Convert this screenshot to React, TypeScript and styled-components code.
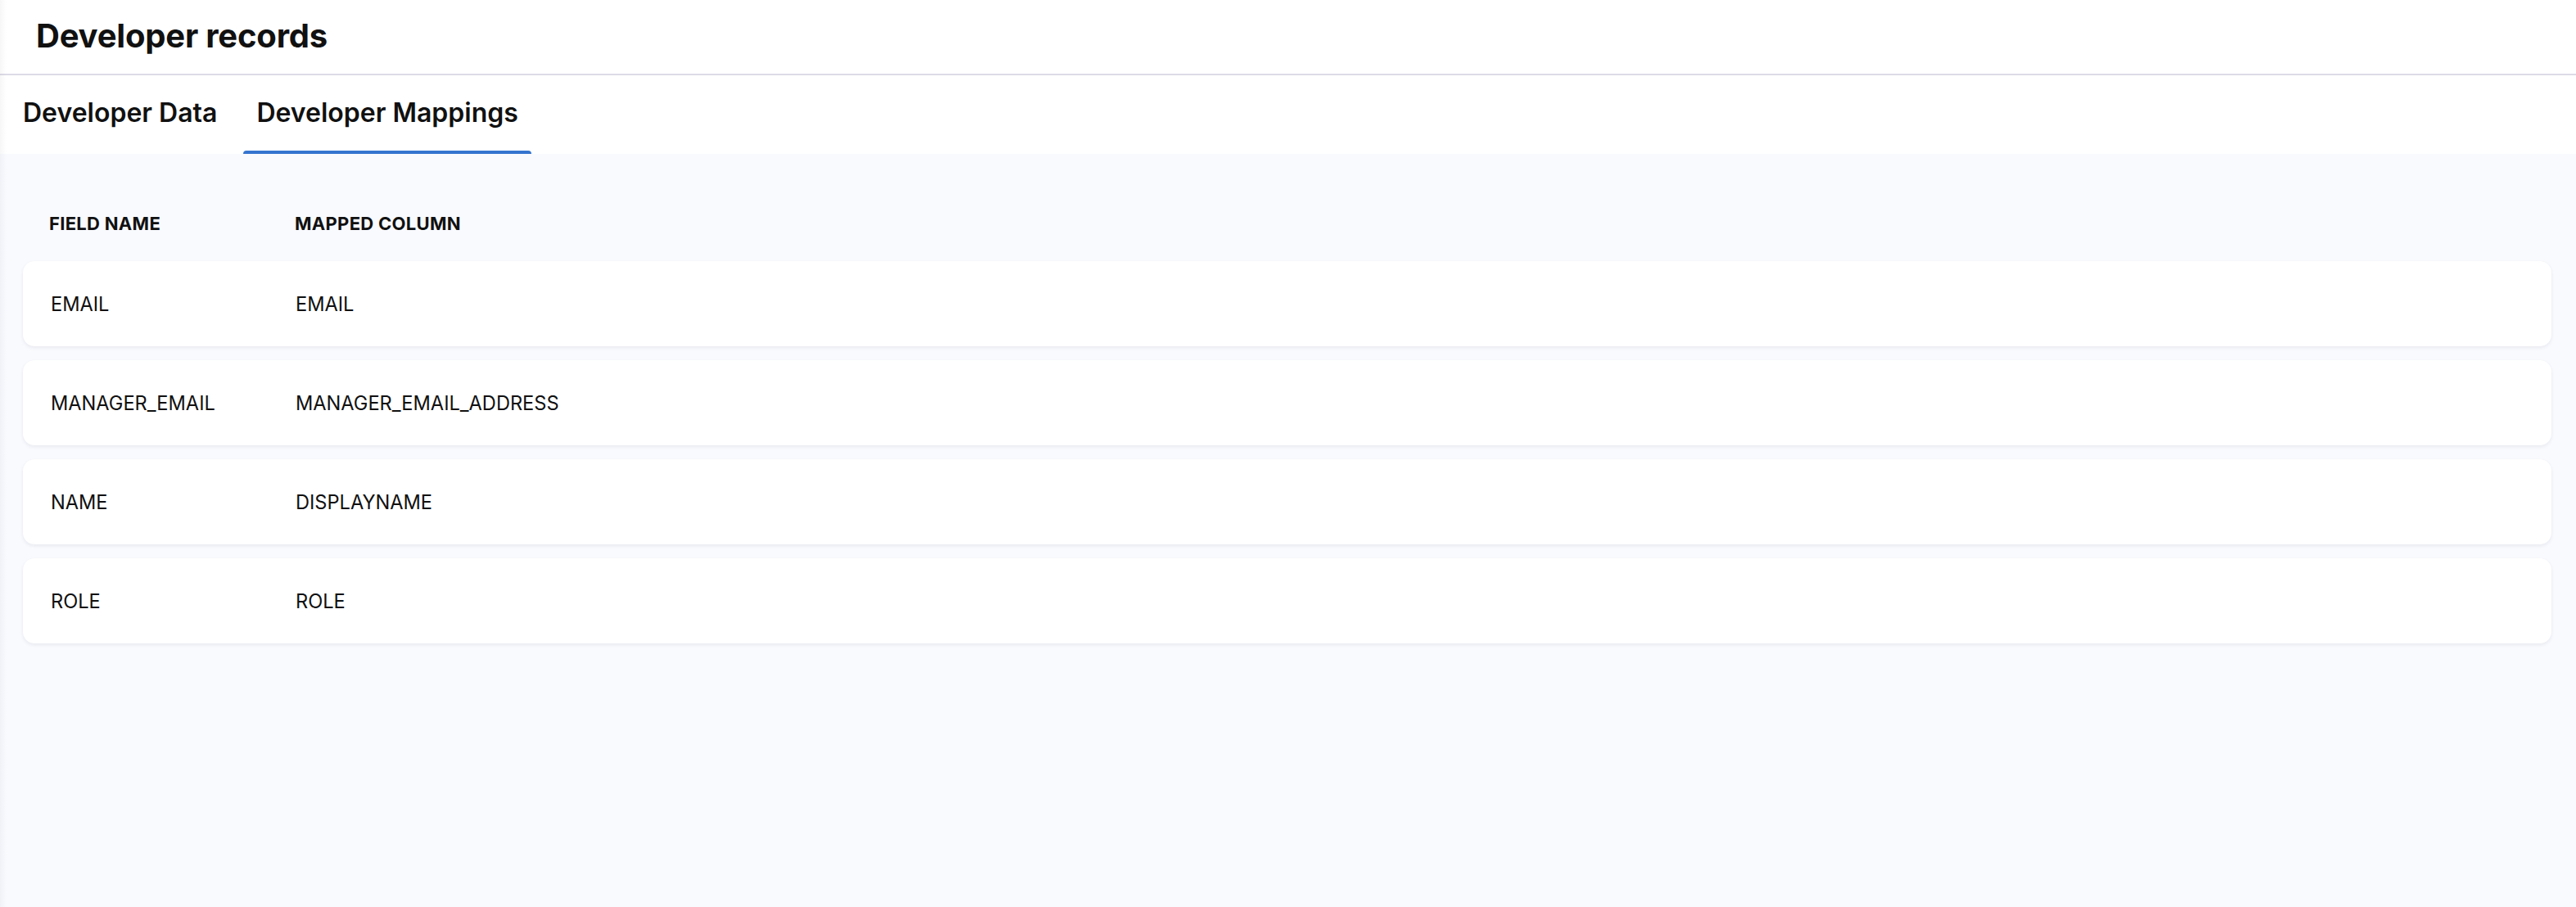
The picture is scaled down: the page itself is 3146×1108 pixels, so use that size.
import React from "react";
import styled, { createGlobalStyle } from "styled-components";

const GlobalStyle = createGlobalStyle`
  html, body {
    margin: 0;
    padding: 0;
    background: #ffffff;
  }
  body {
    font-family: Inter, "Noto Sans", "Liberation Sans", sans-serif;
    color: #111111;
  }
  * { box-sizing: border-box; }
`;

const Page = styled.div`
  position: relative;
  display: flex;
  flex-direction: column;
  min-height: 100vh;
  &::before {
    content: "";
    position: absolute;
    left: 0;
    top: 0;
    bottom: 0;
    width: 8px;
    background: linear-gradient(to right, rgba(20, 20, 60, 0.035), rgba(20, 20, 60, 0));
    pointer-events: none;
    z-index: 2;
  }
`;

const Header = styled.header`
  height: 92px;
  display: flex;
  align-items: center;
  padding: 0 0 4px 44px;
  border-bottom: 2px solid #dddbe7;
  background: #ffffff;
`;

const Title = styled.h1`
  margin: 0;
  font-size: 40px;
  font-weight: 700;
  letter-spacing: -0.2px;
  color: #111111;
`;

const TabBar = styled.nav`
  height: 96px;
  display: flex;
  align-items: stretch;
  gap: 16px;
  padding-left: 12px;
  background: #ffffff;
`;

const Tab = styled.button<{ $active?: boolean }>`
  position: relative;
  border: none;
  background: transparent;
  padding: 0 16px 6px;
  font-family: inherit;
  font-size: 32px;
  font-weight: 600;
  color: #111111;
  cursor: pointer;
  display: flex;
  align-items: center;
  &::after {
    content: "";
    position: absolute;
    left: 0;
    right: 0;
    bottom: 0;
    height: 4px;
    border-radius: 4px 4px 0 0;
    background: ${(p) => (p.$active ? "#3474cf" : "transparent")};
  }
`;

const Content = styled.main`
  flex: 1;
  background: #f9fafe;
  padding: 60px 30px 48px 28px;
`;

const ColumnHeader = styled.div`
  display: grid;
  grid-template-columns: 300px 1fr;
  align-items: center;
  height: 50px;
  padding-left: 32px;
  margin-bottom: 21px;
  font-size: 22px;
  font-weight: 700;
  letter-spacing: 0.3px;
  color: #111111;
`;

const Rows = styled.div`
  display: flex;
  flex-direction: column;
  gap: 17px;
`;

const Row = styled.div`
  display: grid;
  grid-template-columns: 299px 1fr;
  align-items: center;
  height: 104px;
  padding-left: 34px;
  background: #ffffff;
  border-radius: 14px;
  box-shadow: 0 2px 4px rgba(30, 30, 70, 0.07), 0 0 1px rgba(30, 30, 70, 0.04);
  font-size: 23.6px;
  font-weight: 400;
  color: #111111;
`;

const Cell = styled.span`
  white-space: nowrap;
`;

const mappings = [
  { field: "EMAIL", column: "EMAIL" },
  { field: "MANAGER_EMAIL", column: "MANAGER_EMAIL_ADDRESS" },
  { field: "NAME", column: "DISPLAYNAME" },
  { field: "ROLE", column: "ROLE" },
];

export default function App() {
  return (
    <>
      <GlobalStyle />
      <Page>
        <Header>
          <Title>Developer records</Title>
        </Header>
        <TabBar>
          <Tab>Developer Data</Tab>
          <Tab $active>Developer Mappings</Tab>
        </TabBar>
        <Content>
          <ColumnHeader>
            <Cell>FIELD NAME</Cell>
            <Cell>MAPPED COLUMN</Cell>
          </ColumnHeader>
          <Rows>
            {mappings.map((m) => (
              <Row key={m.field}>
                <Cell>{m.field}</Cell>
                <Cell>{m.column}</Cell>
              </Row>
            ))}
          </Rows>
        </Content>
      </Page>
    </>
  );
}
